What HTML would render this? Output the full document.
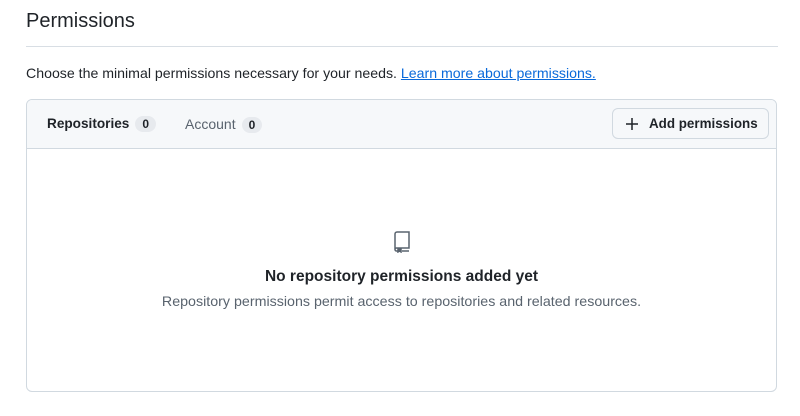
<!DOCTYPE html>
<html><head><style>
body{margin:0;width:800px;height:416px;background:#fff;font-family:"Liberation Sans",sans-serif;color:#1f2328;position:relative;overflow:hidden}
.h{position:absolute;left:26px;top:10px;font-size:20px;}
.hr{position:absolute;left:26px;right:22px;top:46px;border-top:1px solid #d8dee4}
.p{position:absolute;left:26px;top:65px;font-size:14.15px}
.p a{color:#0969da;text-decoration:underline}
.box{position:absolute;left:26px;top:99px;width:751px;height:293px;border:1px solid #d1d9e0;border-radius:6px;box-sizing:border-box;overflow:hidden}
.hd{height:48px;background:#f6f8fa;border-bottom:1px solid #d1d9e0;position:relative}
.tab{position:absolute;top:16px;font-size:14px}
.c{display:inline-block;background:#e7eaee;border-radius:10px;font-size:12px;font-weight:bold;padding:1px 7px;margin-left:6px;color:#1f2328}
.btn{position:absolute;right:7px;top:8px;width:157px;height:31px;border:1px solid #d1d9e0;border-radius:6px;background:#f6f8fa;box-sizing:border-box;font-size:13.4px;font-weight:bold;line-height:29px;padding-left:36px}
.t{position:absolute;left:0;right:0;text-align:center}
</style></head><body>
<div class="h">Permissions</div>
<div class="hr"></div>
<div class="p">Choose the minimal permissions necessary for your needs. <a>Learn more about permissions.</a></div>
<div class="box">
<div class="hd">
<div class="tab" style="left:20px;font-weight:bold;font-size:13.6px">Repositories<span class="c">0</span></div>
<div class="tab" style="left:158px;color:#59636e">Account<span class="c">0</span></div>
<div class="btn"><svg style="position:absolute;left:13px;top:9px" width="12" height="12" viewBox="0 0 12 12"><path d="M6 0v12M0 6h12" stroke="#1f2328" stroke-width="1.5"/></svg>Add permissions</div>
</div>
<svg style="position:absolute;left:366px;top:131px" width="18" height="22" viewBox="0 0 18 22" fill="none" stroke="#59636e" stroke-width="1.5"><path d="M2 19V3a2 2 0 0 1 2-2h12v16H3.5A1.5 1.5 0 0 0 2 18.5 1.5 1.5 0 0 0 3.5 20h1M9 20h7"/><path d="M5 18h3v3l-1.5-1-1.5 1z" fill="#59636e"/></svg>
<div class="t" style="top:168px;font-size:15.5px;font-weight:bold">No repository permissions added yet</div>
<div class="t" style="top:194px;font-size:14.25px;color:#59636e">Repository permissions permit access to repositories and related resources.</div>
</div>
</body></html>
